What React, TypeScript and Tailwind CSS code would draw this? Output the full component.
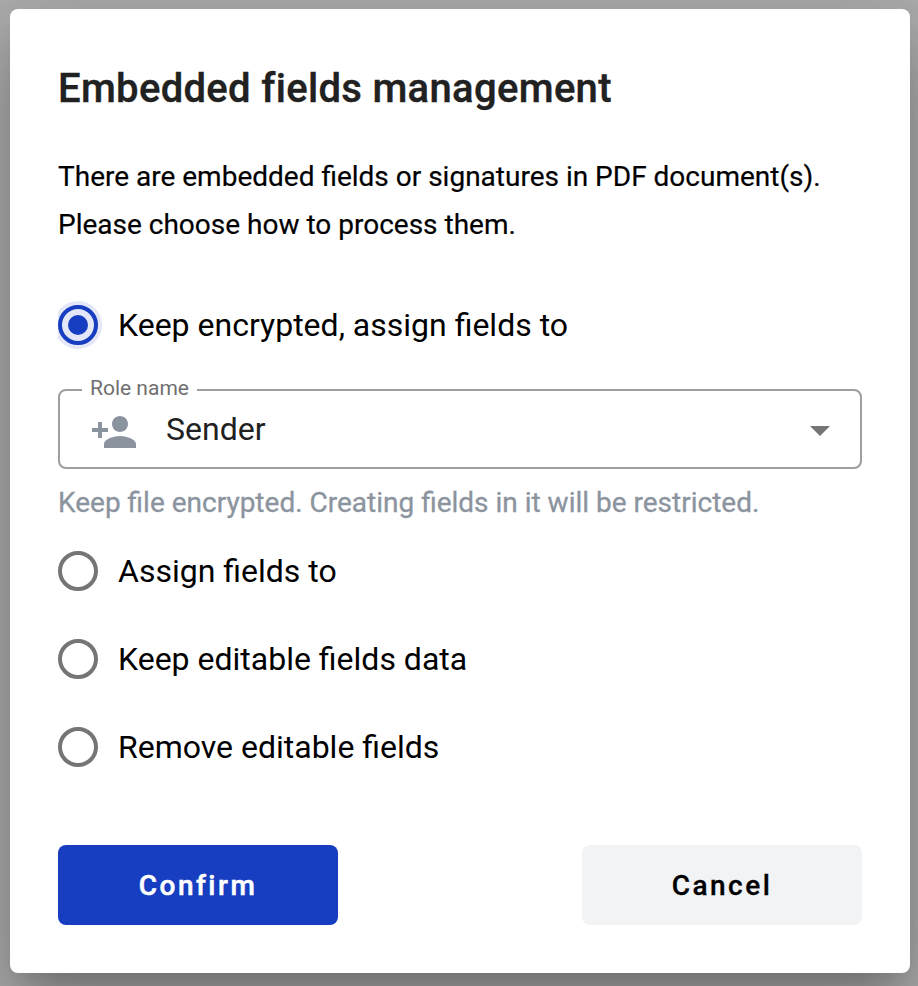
import React from "react";

function Radio({ label, checked = false }: { label: string; checked?: boolean }) {
  return (
    <label className="flex h-10 items-center gap-5">
      <span
        className={
          checked
            ? "flex size-10 shrink-0 items-center justify-center rounded-full border-4 border-[#173dc0] bg-[#e3e7f7] shadow-[0_0_0_4px_#e3e7f7] [clip-path:inset(-4px_-4px_-4px_0)]"
            : "flex size-10 shrink-0 items-center justify-center rounded-full border-4 border-[#757575]"
        }
      >
        {checked && <span className="size-5 rounded-full bg-[#173dc0]" />}
      </span>
      <span className="text-[32px] leading-10 whitespace-nowrap text-black">{label}</span>
    </label>
  );
}

export default function App() {
  return (
    <div className="h-[986px] w-[918px] overflow-hidden bg-[#adadad] pt-[9px] pl-[10px] font-[Roboto,sans-serif]">
      <div className="flex h-[964px] w-[900px] flex-col rounded-lg bg-white px-12 pt-12 shadow-[0_22px_30px_-14px_rgba(0,0,0,0.2),0_48px_76px_6px_rgba(0,0,0,0.14),0_18px_92px_16px_rgba(0,0,0,0.12)]">
        <h1 className="h-16 text-[40px] leading-[64px] font-medium tracking-[0.32px] whitespace-nowrap text-[#212121] [-webkit-text-stroke:0.4px_#212121]">
          Embedded fields management
        </h1>
        <p className="mt-8 text-[28px] leading-[48px] whitespace-nowrap text-black [-webkit-text-stroke:0.2px_black]">
          There are embedded fields or signatures in PDF document(s).
          <br />
          Please choose how to process them.
        </p>
        <div className="mt-14">
          <Radio label="Keep encrypted, assign fields to" checked />
        </div>
        <div className="relative mt-11 flex h-20 w-[804px] shrink-0 items-center rounded-lg border-2 border-[#9e9e9e]">
          <span className="absolute -top-[17px] left-[22px] bg-white px-2 text-[21px] leading-7 whitespace-nowrap text-[#6f6f6f]">Role name</span>
          <svg className="mt-1.5 ml-[30px] size-12" viewBox="0 0 24 24" fill="#8b949e">
            <path d="M15 12c2.21 0 4-1.79 4-4s-1.79-4-4-4-4 1.79-4 4 1.79 4 4 4zm-9-2V7H4v3H1v2h3v3h2v-3h3v-2H6zm9 4c-2.67 0-8 1.34-8 4v2h16v-2c0-2.66-5.33-4-8-4z" />
          </svg>
          <span className="ml-7 text-[32px] leading-10 text-[#212121]">Sender</span>
          <svg className="mt-1 mr-[30px] ml-auto h-[10px] w-5" viewBox="0 0 20 10" fill="#757575">
            <path d="M0 0h20L10 10z" />
          </svg>
        </div>
        <p className="mt-3 text-[28px] leading-[44px] whitespace-nowrap text-[#8b949e] [-webkit-text-stroke:0.3px_#8b949e]">
          Keep file encrypted. Creating fields in it will be restricted.
        </p>
        <div className="mt-[26px] flex flex-col gap-12">
          <Radio label="Assign fields to" />
          <Radio label="Keep editable fields data" />
          <Radio label="Remove editable fields" />
        </div>
        <div className="mt-[78px] flex justify-between">
          <button className="h-20 w-[280px] rounded-lg bg-[#173dc0] pt-0.5 text-[28px] font-medium tracking-[2.5px] text-white [-webkit-text-stroke:0.5px_white]">
            Confirm
          </button>
          <button className="h-20 w-[280px] rounded-lg bg-[#f1f3f5] pt-0.5 text-[28px] font-medium tracking-[2.5px] text-black [-webkit-text-stroke:0.3px_black]">
            Cancel
          </button>
        </div>
      </div>
    </div>
  );
}
